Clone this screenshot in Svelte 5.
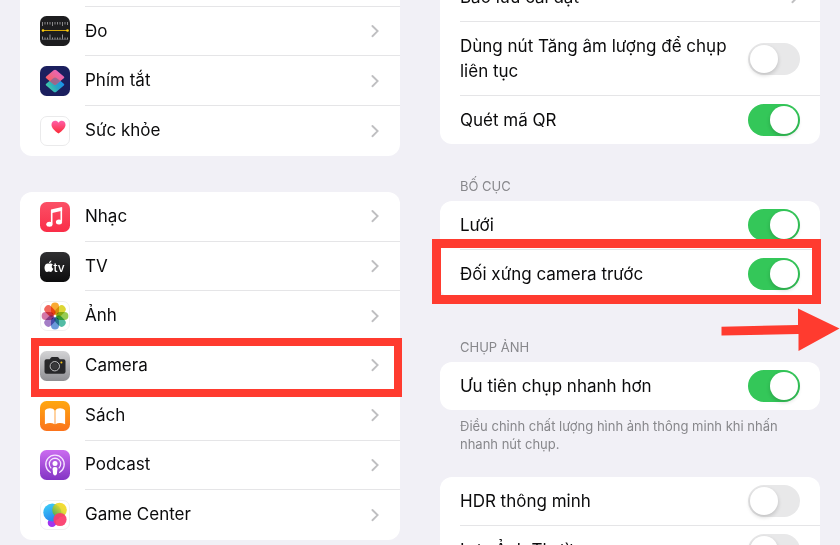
<script lang="ts">
	const tools = [
		{ id: 'measure', label: 'Đo' },
		{ id: 'shortcuts', label: 'Phím tắt' },
		{ id: 'health', label: 'Sức khỏe' }
	];

	const apps = [
		{ id: 'music', label: 'Nhạc' },
		{ id: 'tv', label: 'TV' },
		{ id: 'photos', label: 'Ảnh' },
		{ id: 'camera', label: 'Camera', marked: true },
		{ id: 'books', label: 'Sách' },
		{ id: 'podcasts', label: 'Podcast' },
		{ id: 'games', label: 'Game Center' }
	];

	const petals = ['#f9a01b', '#d9d21f', '#8cc63f', '#3fb59b', '#5b8fd6', '#9a6fc0', '#d0679d', '#f0554a'];

	let capture = $state([
		{ id: 'burst', label: 'Dùng nút Tăng âm lượng để chụp liên tục', on: false },
		{ id: 'qr', label: 'Quét mã QR', on: true }
	]);
	let layout = $state([
		{ id: 'grid', label: 'Lưới', on: true },
		{ id: 'mirror', label: 'Đối xứng camera trước', on: true, marked: true }
	]);
	let photo = $state([{ id: 'faster', label: 'Ưu tiên chụp nhanh hơn', on: true }]);
	let hdr = $state([
		{ id: 'hdr', label: 'HDR thông minh', on: false },
		{ id: 'keep', label: 'Lưu Ảnh Thường', on: false }
	]);
</script>

{#snippet chevron()}
	<svg class="chevron" viewBox="0 0 10 14" aria-hidden="true">
		<path d="M2.4 2 7.6 7.1 2.4 12.2" fill="none" stroke="#bfbfc1" stroke-width="1.9" stroke-linecap="round" stroke-linejoin="miter" />
	</svg>
{/snippet}

{#snippet icon(id: string)}
	<svg class="icon" viewBox="0 0 30 30" aria-hidden="true">
		{#if id === 'measure'}
			<rect width="30" height="30" rx="6.5" fill="#1d1d1f" />
			<path d="M2.5 6v4M5 6v2.5M7.5 6v2.5M10 6v2.5M12.5 6v4M15 6v2.500M17.5 6v2.5M20 6v2.5M22.5 6v4M25 6v2.5M27.5 6v3" stroke="#a5a5a7" stroke-width=".8" />
			<path d="M2.5 23.5v-3M5 23.5v-2M7.5 23.5v-2M10 23.5v-5M12.5 23.5v-2M15 23.5v-2M17.5 23.5v-2M20 23.5v-2M22.5 23.5v-5M25 23.5v-2M27.5 23.5v-2" stroke="#a5a5a7" stroke-width=".9" />
			<path d="M2 23.3h26" stroke="#77777a" stroke-width=".6" />
			<path d="M3 14.5h24" stroke="#d8a90a" stroke-width="1" />
			<circle cx="3" cy="14.5" r="1.3" fill="#ffd012" />
			<circle cx="27.5" cy="14.5" r="1.3" fill="#ffd012" />
		{:else if id === 'shortcuts'}
			<defs>
				<linearGradient id="sc-low" x1="0" y1=".8" x2="1" y2=".3">
					<stop offset="0" stop-color="#45d8a0" />
					<stop offset=".5" stop-color="#2ba6c0" />
					<stop offset="1" stop-color="#168bf5" />
				</linearGradient>
				<linearGradient id="sc-top" x1="0" y1=".8" x2=".8" y2="0">
					<stop offset="0" stop-color="#ff5a4e" />
					<stop offset=".5" stop-color="#ee6690" />
					<stop offset="1" stop-color="#e763c8" />
				</linearGradient>
			</defs>
			<rect width="30" height="30" rx="6.5" fill="#1b1f5e" />
			<path d="M13.6 11.6q1.4-.9 2.8 0l7.4 6.2q1.1.9 0 1.8l-7.400 6.2q-1.400 1-2.800 0l-7.400-6.200q-1.100-.9 0-1.800Z" fill="url(#sc-low)" />
			<path d="M13.6 4.200q1.400-1 2.800 0l7.400 6.300q1.100.9 0 1.800l-7.400 6q-1.400 1-2.800 0l-7.400-6q-1.100-.9 0-1.800Z" fill="url(#sc-top)" />
			<path d="m9.800 15.200 3.800-3.200q1.400-.9 2.800 0l4 3.100-4 3.200q-1.400 1-2.800 0Z" fill="#7d6a96" opacity=".75" />
		{:else if id === 'health'}
			<defs>
				<linearGradient id="heart" x1="0" y1="0" x2="0" y2="1">
					<stop offset="0" stop-color="#ff5fa9" />
					<stop offset="1" stop-color="#fb2b35" />
				</linearGradient>
			</defs>
			<rect x=".5" y=".5" width="29" height="29" rx="6.5" fill="#fff" stroke="#e4e4e6" stroke-width=".8" />
			<path d="M18.5 17.5C14.5 14.6 11.5 12 11.5 8.7c0-4.1 4.9-5.2 7-2 2.1-3.2 7-2.1 7 2 0 3.3-3 5.9-7 8.8Z" fill="url(#heart)" />
		{:else if id === 'music'}
			<defs>
				<linearGradient id="music" x1="0" y1="0" x2="0" y2="1">
					<stop offset="0" stop-color="#fb5066" />
					<stop offset="1" stop-color="#fa2d48" />
				</linearGradient>
			</defs>
			<rect width="30" height="30" rx="6.5" fill="url(#music)" />
			<path d="m11 7.500 11.100-2.500v3.700L11 11.200Z" fill="#fff" />
			<path d="M11.700 8v13.700M21.300 5.800v13.600" stroke="#fff" stroke-width="1.600" />
			<ellipse cx="9.400" cy="22.300" rx="3.100" ry="2.500" fill="#fff" />
			<ellipse cx="19" cy="20" rx="3.100" ry="2.500" fill="#fff" />
		{:else if id === 'tv'}
			<defs>
				<linearGradient id="tv" x1="0" y1="0" x2="0" y2="1">
					<stop offset="0" stop-color="#303032" />
					<stop offset="1" stop-color="#0c0c0d" />
				</linearGradient>
			</defs>
			<rect width="30" height="30" rx="6.5" fill="url(#tv)" />
			<path d="M9.200 11.800c1.300-.7 2.700-.4 3.600.7-1.600 1.100-1.300 3.500.5 4.300-.6 1.600-1.600 3.200-2.700 3.200-.7 0-1-.4-1.800-.4s-1.200.4-1.800.4C5.600 20 4.500 17.800 4.500 15.700c0-3 2.300-4.700 4.700-3.900ZM9 11.200c0-1.300 1-2.500 2.400-2.700.1 1.400-1.100 2.700-2.400 2.700Z" fill="#fff" />
			<text x="13.500" y="20" font-family="Inter, sans-serif" font-size="12" font-weight="500" fill="#fff">tv</text>
		{:else if id === 'photos'}
			<rect x=".5" y=".5" width="29" height="29" rx="6.5" fill="#fff" stroke="#ececee" stroke-width=".8" />
			<g class="petals">
				{#each petals as color, i}
					<rect x="11" y="1.600" width="8" height="12.200" rx="4" fill={color} opacity=".9" transform="rotate({i * 45} 15 15)" />
				{/each}
			</g>
		{:else if id === 'camera'}
			<defs>
				<linearGradient id="camera" x1="0" y1="0" x2="0" y2="1">
					<stop offset="0" stop-color="#d3d3d5" />
					<stop offset="1" stop-color="#8f8f93" />
				</linearGradient>
			</defs>
			<rect width="30" height="30" rx="6.5" fill="url(#camera)" />
			<path d="M6.500 8.200h3.200l1.300-1.600q.4-.5 1-.5h5.500q.6 0 1 .5l1.300 1.600h3.700q2 0 2 2v10.600q0 2-2 2h-17q-2 0-2-2V10.200q0-2 2-2Z" fill="#28282a" />
			<circle cx="14.800" cy="15.200" r="4.700" fill="#28282a" stroke="#bcbcbe" stroke-width="1" />
			<circle cx="14.800" cy="15.200" r="3.100" fill="#39393b" />
			<circle cx="21.400" cy="11.500" r="1" fill="#f7c516" />
		{:else if id === 'books'}
			<defs>
				<linearGradient id="books" x1="0" y1="0" x2="0" y2="1">
					<stop offset="0" stop-color="#ffa70f" />
					<stop offset="1" stop-color="#fb731c" />
				</linearGradient>
			</defs>
			<rect width="30" height="30" rx="6.5" fill="url(#books)" />
			<path d="M14.600 9.500v13.700q-4.200-2.500-9.700.1V9.600C7 6.500 13 6.500 14.600 9.500ZM15.400 9.500v13.700q4.200-2.500 9.700.1V9.600C23 6.500 17 6.500 15.400 9.500Z" fill="#fff" />
		{:else if id === 'podcasts'}
			<defs>
				<linearGradient id="podcasts" x1="0" y1="0" x2="0" y2="1">
					<stop offset="0" stop-color="#cb6cf0" />
					<stop offset="1" stop-color="#8334c4" />
				</linearGradient>
			</defs>
			<rect width="30" height="30" rx="6.5" fill="url(#podcasts)" />
			<g fill="none" stroke="#f6e6ff" stroke-width="1.300" stroke-linecap="round">
				<path d="M10.300 22.300a9.200 9.200 0 1 1 9.400 0" />
				<path d="M10.900 17.900a5.700 5.700 0 1 1 8.200 0" />
			</g>
			<circle cx="15" cy="13.600" r="2.500" fill="#fff" />
			<path d="M15 17c1.800 0 2.500.8 2.400 2.200l-.5 4.600q-.3 1.800-1.900 1.800t-1.900-1.800l-.5-4.600C12.500 17.800 13.200 17 15 17Z" fill="#fff" />
		{:else if id === 'games'}
			<defs>
				<linearGradient id="gc-blue" x1="0" y1="0" x2=".4" y2="1">
					<stop offset="0" stop-color="#3fd4f8" />
					<stop offset="1" stop-color="#2785ee" />
				</linearGradient>
				<linearGradient id="gc-yellow" x1="1" y1="0" x2="0" y2="1">
					<stop offset="0" stop-color="#ffd914" />
					<stop offset=".4" stop-color="#e6d61d" />
					<stop offset="1" stop-color="#31a84d" />
				</linearGradient>
			</defs>
			<rect x=".5" y=".5" width="29" height="29" rx="6.5" fill="#fff" stroke="#ececee" stroke-width=".8" />
			<circle cx="12" cy="22.800" r="4.300" fill="#a234ee" />
			<circle cx="12.300" cy="12.500" r="9" fill="url(#gc-blue)" />
			<circle cx="19.500" cy="10" r="7.300" fill="url(#gc-yellow)" opacity=".88" />
			<circle cx="20" cy="19.500" r="6.600" fill="#fb3b6c" opacity=".93" />
		{/if}
	</svg>
{/snippet}

{#snippet links(items: { id: string; label: string; marked?: boolean }[])}
	{#each items as item (item.id)}
		<li class="link-row">
			<a href="#{item.id}">
				{@render icon(item.id)}
				<span class="link-body">
					{item.label}
					{@render chevron()}
				</span>
			</a>
			{#if item.marked}<span class="mark mark-link"></span>{/if}
		</li>
	{/each}
{/snippet}

{#snippet switches(items: { id: string; label: string; on: boolean; marked?: boolean }[])}
	{#each items as item (item.id)}
		<div class="switch-row">
			<label for={item.id}>{item.label}</label>
			<input id={item.id} type="checkbox" role="switch" bind:checked={item.on} />
			{#if item.marked}<span class="mark mark-switch"></span>{/if}
		</div>
	{/each}
{/snippet}

<main>
	<nav class="pane">
		<ul class="card continued tools">{@render links(tools)}</ul>
		<ul class="card apps">{@render links(apps)}</ul>
	</nav>

	<div class="pane">
		<section class="card continued capture">
			<a class="preserve" href="#preserve">Bảo lưu cài đặt {@render chevron()}</a>
			{@render switches(capture)}
		</section>

		<section class="group">
			<h2>Bố cục</h2>
			<div class="card">{@render switches(layout)}</div>
			<svg class="arrow" viewBox="0 0 119 44" aria-hidden="true">
				<path d="M.5 18.700 77 17V.5L118.500 20.500 77.500 43V26L.5 27.500Z" fill="#ff3b2f" />
			</svg>
		</section>

		<section class="group photo">
			<h2>Chụp ảnh</h2>
			<div class="card">{@render switches(photo)}</div>
			<p>Điều chỉnh chất lượng hình ảnh thông minh khi nhấn nhanh nút chụp.</p>
		</section>

		<section class="card last">{@render switches(hdr)}</section>
	</div>
</main>

<style>
	:global(body) {
		margin: 0;
		background: #f1f0f6;
		color: #0b0b0c;
		font-family: Inter, 'Liberation Sans', sans-serif;
		font-size: 17px;
		line-height: 25px;
	}

	main {
		display: grid;
		grid-template-columns: 1fr 1fr;
		height: 100vh;
		overflow: hidden;
	}

	.pane { padding: 0 20px; min-width: 0; }

	.card {
		margin: 0;
		padding: 0;
		list-style: none;
		background: #fff;
		border-radius: 12px;
	}

	.continued { border-radius: 0 0 12px 12px; }

	/* rows share the card's height evenly */
	.tools, .apps { display: grid; grid-auto-rows: 1fr; }
	.tools { min-height: 150px; padding-top: 6px; }
	.apps { min-height: 348px; margin-top: 36px; }

	.link-row { position: relative; display: flex; }

	.link-row a {
		flex: 1;
		display: flex;
		align-items: center;
		gap: 15px;
		padding-left: 20px;
		color: inherit;
		text-decoration: none;
	}

	.icon { width: 30px; height: 30px; flex: none; }
	.petals rect { mix-blend-mode: multiply; }

	.link-body {
		flex: 1;
		align-self: stretch;
		display: flex;
		align-items: center;
		justify-content: space-between;
		padding-right: 20px;
		border-bottom: 1px solid #e5e5e7;
	}

	.link-row:last-child .link-body { border-bottom-color: transparent; }
	.tools .link-row:first-child .link-body { border-top: 1px solid #e5e5e7; }

	.chevron { width: 10px; height: 14px; flex: none; }

	.capture { overflow: hidden; }

	.preserve {
		display: flex;
		align-items: center;
		justify-content: space-between;
		height: 48px;
		margin-top: -27px;
		padding: 0 20px;
		color: inherit;
		text-decoration: none;
	}

	.switch-row {
		position: relative;
		display: flex;
		align-items: center;
		justify-content: space-between;
		gap: 16px;
		min-height: 48px;
		padding-right: 20px;
		margin-left: 20px;
	}

	.switch-row + .switch-row, .preserve + .switch-row { border-top: 1px solid #e5e5e7; }
	.capture .switch-row label { padding: 12px 0 11px; }

	input {
		appearance: none;
		flex: none;
		display: flex;
		width: 52px;
		height: 32px;
		margin: 0;
		padding: 2px;
		box-sizing: border-box;
		border-radius: 16px;
		background: #e8e8e9;
	}

	input::before {
		content: '';
		width: 28px;
		height: 28px;
		border-radius: 50%;
		background: #fff;
		box-shadow: 0 2px 4px rgba(0, 0, 0, 0.18);
	}

	input:checked { background: #34c759; justify-content: flex-end; }

	.group { position: relative; padding-top: 33px; }
	.photo { padding-top: 40px; }

	h2 {
		margin: 0;
		padding: 0 20px 6px;
		color: #87878b;
		font-size: 13px;
		font-weight: 400;
		line-height: 18px;
		text-transform: uppercase;
	}

	p {
		margin: 0;
		padding: 7px 20px 0;
		color: #87878b;
		font-size: 13px;
		line-height: 18px;
	}

	.last { margin-top: 24px; border-radius: 12px 12px 0 0; }

	/* red annotations lie over the rows */
	.mark { position: absolute; z-index: 1; border: 8px solid #ff3b2f; pointer-events: none; }
	.mark-link { inset: -3px -2px -6px 11px; }
	.mark-switch { inset: -11px -1px -6px -28px; border-width: 9px; }
	.arrow { position: absolute; z-index: 1; width: 119px; height: 44px; right: -20px; bottom: -54px; }
</style>
